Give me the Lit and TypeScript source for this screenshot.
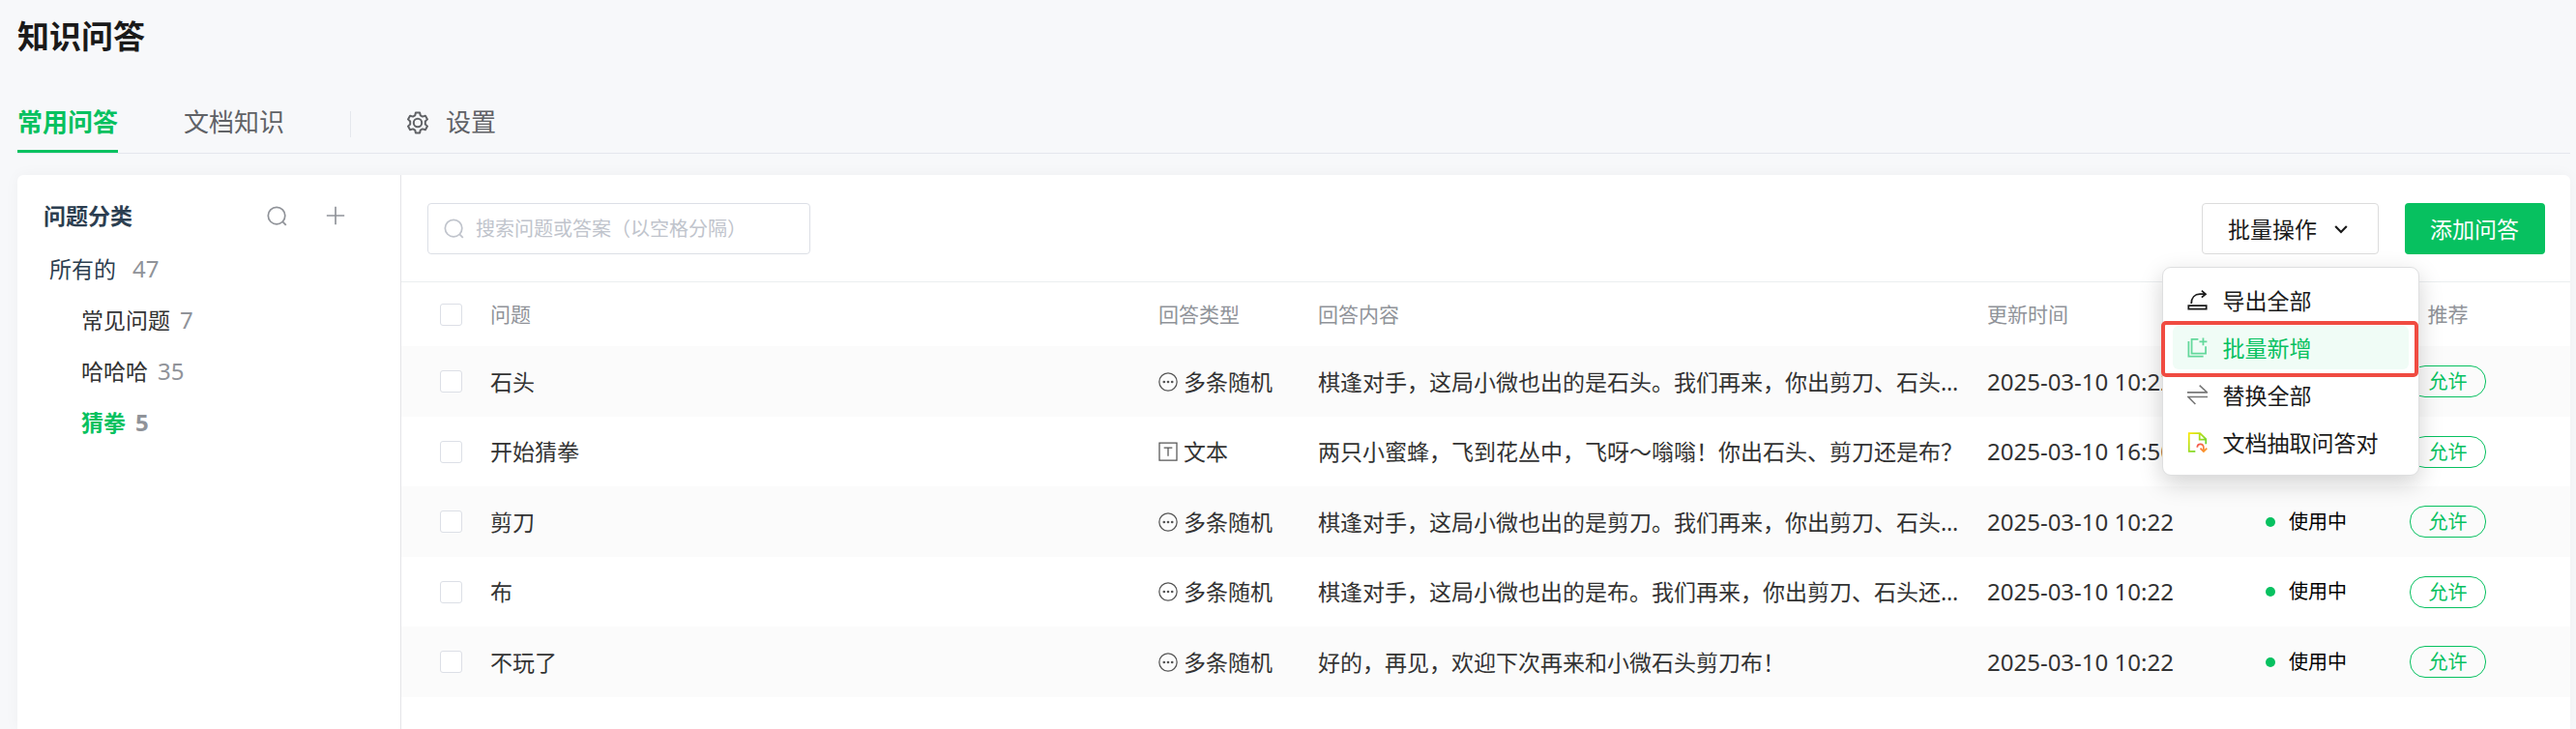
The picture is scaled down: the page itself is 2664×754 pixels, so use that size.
import { LitElement, html, css, svg, TemplateResult } from "lit";
import { customElement, state } from "lit/decorators.js";
import { classMap } from "lit/directives/class-map.js";

interface Category {
  name: string;
  count: number;
}

interface Row {
  question: string;
  kind: "random" | "text";
  answer: string;
  time: string;
}

const categories: Category[] = [
  { name: "常见问题", count: 7 },
  { name: "哈哈哈", count: 35 },
  { name: "猜拳", count: 5 },
];

const rows: Row[] = [
  { question: "石头", kind: "random", answer: "棋逢对手，这局小微也出的是石头。我们再来，你出剪刀、石头还是布？", time: "2025-03-10 10:22" },
  { question: "开始猜拳", kind: "text", answer: "两只小蜜蜂，飞到花丛中，飞呀～嗡嗡！你出石头、剪刀还是布？", time: "2025-03-10 16:50" },
  { question: "剪刀", kind: "random", answer: "棋逢对手，这局小微也出的是剪刀。我们再来，你出剪刀、石头还是布？", time: "2025-03-10 10:22" },
  { question: "布", kind: "random", answer: "棋逢对手，这局小微也出的是布。我们再来，你出剪刀、石头还是布？", time: "2025-03-10 10:22" },
  { question: "不玩了", kind: "random", answer: "好的，再见，欢迎下次再来和小微石头剪刀布！", time: "2025-03-10 10:22" },
];

const icon = (size: number, body: TemplateResult | unknown) => html`
  <svg width=${size} height=${size} viewBox="0 0 24 24" fill="none" stroke="currentColor" stroke-width="2" aria-hidden="true">${body}</svg>
`;

const searchIcon = svg`<circle cx="11.5" cy="11.5" r="10"/><path d="M18.4 18.4 22.6 22.8"/>`;
const plusIcon = svg`<path d="M12 1v22M1 12h22"/>`;
const gearIcon = svg`<path d="M9.9 1.4h4.2l.7 3 2.1 1.2 3-.9 2.1 3.7-2.2 2.1v3l2.2 2.1-2.1 3.7-3-.9-2.1 1.2-.7 3H9.9l-.7-3-2.1-1.2-3 .9L2 15.6l2.2-2.100v-3L2 8.400l2.100-3.700 3 .9 2.100-1.200z" stroke-linejoin="round"/><circle cx="12" cy="12" r="4.200"/>`;
const dotsIcon = svg`<circle cx="12" cy="12" r="11" stroke-width="1.500"/><g fill="currentColor" stroke="none"><circle cx="7" cy="12" r="1.600"/><circle cx="12" cy="12" r="1.600"/><circle cx="17" cy="12" r="1.600"/></g>`;
const textIcon = svg`<path d="M1.200 1.200h21.600v21.600H1.200zM6.800 7.200h10.400M12 7.200v10.600" stroke-width="1.500"/>`;
const chevronIcon = svg`<path d="M2 7l10 10L22 7" stroke-width="3.800"/>`;
const exportIcon = svg`<path d="M1.500 18.500h21v4h-21zM4.800 16C4.800 9 9 4.800 15 4.800h6.500M17 .8l4.700 4-4.700 4"/>`;
const batchIcon = svg`<path d="M13 2H5.200v17h16.600v-8.500M1.600 4.500v18h17.400"/><path d="M18.800 .5v9M14.300 5h9"/>`;
const swapIcon = svg`<path d="M0 9h23.500L14.500 .8M24 14.200H.8l8.800 8.600" stroke-width="1.800"/>`;
const extractIcon = svg`
  <defs>
    <linearGradient id="page" x1="0" y1="0" x2="1" y2="1">
      <stop offset="0" stop-color="#fbe800"/><stop offset="1" stop-color="#3fcf3f"/>
    </linearGradient>
    <linearGradient id="turn" x1="0" y1="0" x2="1" y2="1">
      <stop offset="0" stop-color="#f4514f"/><stop offset="1" stop-color="#fba428"/>
    </linearGradient>
  </defs>
  <path d="M9.500 22.800H2V1.200h13l7 7V14M14.500 1.200v7.500H22" stroke="url(#page)"/>
  <path d="M11.800 18c0-2.800 1.800-4 3.800-4 2.600 0 3.700 1.800 3.700 4.500v4M15.500 19l3.800 4 3.900-4" stroke="url(#turn)"/>`;

const menuItems = [
  { label: "导出全部", art: exportIcon, cls: "export" },
  { label: "批量新增", art: batchIcon, cls: "batch" },
  { label: "替换全部", art: swapIcon, cls: "swap" },
  { label: "文档抽取问答对", art: extractIcon, cls: "extract" },
];

const sharedReset = css`
  * { box-sizing: border-box; }
  button, input { font: inherit; color: inherit; margin: 0; }
  button { padding: 0; border: 0; background: none; cursor: pointer; }
  svg { display: block; flex: none; }
`;

@customElement("batch-menu")
export class BatchMenu extends LitElement {
  @state() private open = true;
  @state() private current = 1;

  static styles = [
    sharedReset,
    css`
      :host { display: block; position: relative; }
      .trigger {
        display: flex;
        align-items: center;
        gap: 18px;
        height: 53px;
        padding: 0 31px 0 26px;
        border: 1px solid #dcdcdc;
        border-radius: 4px;
        background: #fff;
        color: #1a1a1a;
      }
      .menu {
        position: absolute;
        z-index: 2;
        top: calc(100% + 13px);
        left: 50%;
        width: 266px;
        margin-left: -133px;
        padding: 11px 10px;
        display: flex;
        flex-direction: column;
        gap: 4px;
        border: 1px solid #dedfe0;
        border-radius: 9px;
        background: #fff;
        box-shadow: 0 8px 24px rgba(0, 0, 0, 0.18);
      }
      .item {
        position: relative;
        display: flex;
        align-items: center;
        gap: 16px;
        height: 45px;
        padding-left: 15px;
        border-radius: 6px;
        color: #1a1a1a;
        white-space: nowrap;
      }
      .swap svg { color: #777; }
      .current { background: #f0fcf6; color: #07c160; }
      .current svg { opacity: 0.6; }
      .current::after {
        content: "";
        position: absolute;
        inset: -5px -10px -8px -12px;
        border: 4px solid #f04b41;
        border-radius: 5px;
      }
    `,
  ];

  render() {
    return html`
      <button class="trigger" aria-haspopup="menu" aria-expanded=${this.open} @click=${() => (this.open = !this.open)}>
        批量操作 ${icon(14, chevronIcon)}
      </button>
      ${this.open
        ? html`<div class="menu" role="menu">
            ${menuItems.map(
              (m, i) => html`<button
                role="menuitem"
                class=${classMap({ item: true, [m.cls]: true, current: i === this.current })}
                @click=${() => (this.current = i)}
              >
                ${icon(21, m.art)}${m.label}
              </button>`
            )}
          </div>`
        : null}
    `;
  }
}

@customElement("app-root")
export class AppRoot extends LitElement {
  @state() private category = "猜拳";

  static styles = [
    sharedReset,
    css`
      :host {
        display: flex;
        flex-direction: column;
        min-height: 100vh;
        box-sizing: border-box;
        padding: 16px 6px 0 18px;
        background: #f7f8fa;
        color: #333;
        font-family: "Noto Sans", "Noto Sans CJK SC", sans-serif;
        font-size: 23px;
        line-height: 32px;
      }
      a { color: inherit; text-decoration: none; }
      h1 { margin: 0 0 38px; font-size: 33px; line-height: 44px; color: #1a1a1a; }
      h2 { margin: 0; font-size: 23px; line-height: 32px; color: #2c3e50; }
      .tabs {
        display: flex;
        align-items: center;
        border-bottom: 1px solid #e4e7ed;
        margin-bottom: 22px;
        font-size: 26px;
        line-height: 57px;
        color: #606266;
      }
      .tab { margin-right: 68px; border-bottom: 3px solid transparent; }
      .tab.on { color: #07c160; border-color: #07c160; font-weight: 700; }
      .divider { width: 1px; height: 27px; background: #e4e7ed; }
      .settings { display: flex; align-items: center; gap: 17px; margin-left: 57px; border-bottom: 3px solid transparent; }
      .card {
        flex: 1;
        display: flex;
        border-radius: 6px 6px 0 0;
        background: #fff;
        box-shadow: 0 0 16px rgba(0, 21, 41, 0.04);
      }
      .side { flex: none; width: 397px; padding: 14px 57px 0 27px; border-right: 1px solid #e4e4e7; }
      .side-head { display: flex; align-items: center; gap: 40px; height: 56px; color: #909399; }
      .side-head h2 { flex: 1; }
      .tree { list-style: none; margin: 0; padding: 0; }
      .tree .tree { padding-left: 39px; }
      .node { display: flex; align-items: center; gap: 10px; width: 100%; height: 53px; }
      .all { gap: 17px; padding-left: 6px; color: #2c3e50; }
      .node.on { color: #07c160; font-weight: 700; }
      .count { font-size: 24px; color: #909399; }
      .main { flex: 1; min-width: 0; }
      .toolbar {
        display: flex;
        align-items: center;
        gap: 27px;
        padding: 29px 26px 28px 27px;
        border-bottom: 1px solid #ebeef0;
      }
      .search {
        display: flex;
        align-items: center;
        gap: 12px;
        width: 396px;
        height: 53px;
        margin-right: auto;
        padding: 0 16px;
        border: 1px solid #dcdfe6;
        border-radius: 4px;
        color: #c0c4cc;
      }
      .search input { flex: 1; min-width: 0; padding: 0; border: 0; outline: 0; background: none; font-size: 20px; color: #333; }
      .search input::placeholder { color: #c0c4cc; opacity: 1; }
      .add { height: 53px; padding: 0 27px 0 26px; border-radius: 4px; background: #07c160; color: #fff; }
      table { width: 100%; table-layout: fixed; border-collapse: collapse; }
      th, td { padding: 0 12px; text-align: left; white-space: nowrap; }
      th { height: 66px; font-size: 21px; font-weight: 400; color: #909399; }
      td { height: 73px; }
      tr:nth-child(even) td { height: 72px; }
      tbody tr:nth-child(odd) { background: #fbfbfb; }
      .c-check { width: 80px; padding-left: 40px; }
      .c-type { width: 165px; }
      .c-answer { width: 692px; }
      .c-time { width: 288px; }
      .c-status { width: 149px; }
      .c-rec { width: 178px; }
      td.c-answer { overflow: hidden; text-overflow: ellipsis; }
      td.c-time { font-size: 24px; }
      .box {
        appearance: none;
        display: block;
        width: 23px;
        height: 23px;
        border: 1px solid #dcdfe6;
        border-radius: 3px;
        background: #fff;
      }
      .box:checked { background: #07c160; border-color: #07c160; }
      .type { display: flex; align-items: center; gap: 6px; }
      .type svg { color: #555; }
      .status { display: flex; align-items: center; gap: 14px; font-size: 20px; color: #000; }
      .status::before { content: ""; width: 10px; height: 10px; border-radius: 50%; background: #07c160; }
      .rec-head { display: block; width: 79px; text-align: center; }
      .pill {
        display: block;
        width: 79px;
        height: 33px;
        border: 1px solid #07c160;
        border-radius: 16px;
        font-size: 20px;
        line-height: 31px;
        text-align: center;
        color: #07c160;
      }
    `,
  ];

  render() {
    return html`
      <h1>知识问答</h1>
      <nav class="tabs">
        <a class="tab on" href="#faq">常用问答</a>
        <a class="tab" href="#docs">文档知识</a>
        <span class="divider"></span>
        <a class="settings" href="#settings">${icon(24, gearIcon)}设置</a>
      </nav>
      <div class="card">
        <aside class="side">
          <div class="side-head">
            <h2>问题分类</h2>
            <button aria-label="搜索分类">${icon(21, searchIcon)}</button>
            <button aria-label="新增分类">${icon(20, plusIcon)}</button>
          </div>
          <ul class="tree">
            <li>
              <button class="node all">所有的 <span class="count">47</span></button>
              <ul class="tree">
                ${categories.map(
                  (c) => html`<li>
                    <button class=${classMap({ node: true, on: c.name === this.category })} @click=${() => (this.category = c.name)}>
                      ${c.name} <span class="count">${c.count}</span>
                    </button>
                  </li>`
                )}
              </ul>
            </li>
          </ul>
        </aside>
        <main class="main">
          <div class="toolbar">
            <label class="search">
              ${icon(21, searchIcon)}
              <input type="text" aria-label="搜索问题或答案" placeholder="搜索问题或答案（以空格分隔）" />
            </label>
            <batch-menu></batch-menu>
            <button class="add">添加问答</button>
          </div>
          <table>
            <thead>
              <tr>
                <th class="c-check"><input class="box" type="checkbox" aria-label="全选" /></th>
                <th>问题</th>
                <th class="c-type">回答类型</th>
                <th class="c-answer">回答内容</th>
                <th class="c-time">更新时间</th>
                <th class="c-status" aria-label="状态"></th>
                <th class="c-rec"><span class="rec-head">推荐</span></th>
              </tr>
            </thead>
            <tbody>
              ${rows.map(
                (r) => html`<tr>
                  <td class="c-check"><input class="box" type="checkbox" aria-label=${r.question} /></td>
                  <td>${r.question}</td>
                  <td>
                    <span class="type">${icon(20, r.kind === "random" ? dotsIcon : textIcon)}${r.kind === "random" ? "多条随机" : "文本"}</span>
                  </td>
                  <td class="c-answer">${r.answer}</td>
                  <td class="c-time">${r.time}</td>
                  <td><span class="status">使用中</span></td>
                  <td><button class="pill">允许</button></td>
                </tr>`
              )}
            </tbody>
          </table>
        </main>
      </div>
    `;
  }
}
